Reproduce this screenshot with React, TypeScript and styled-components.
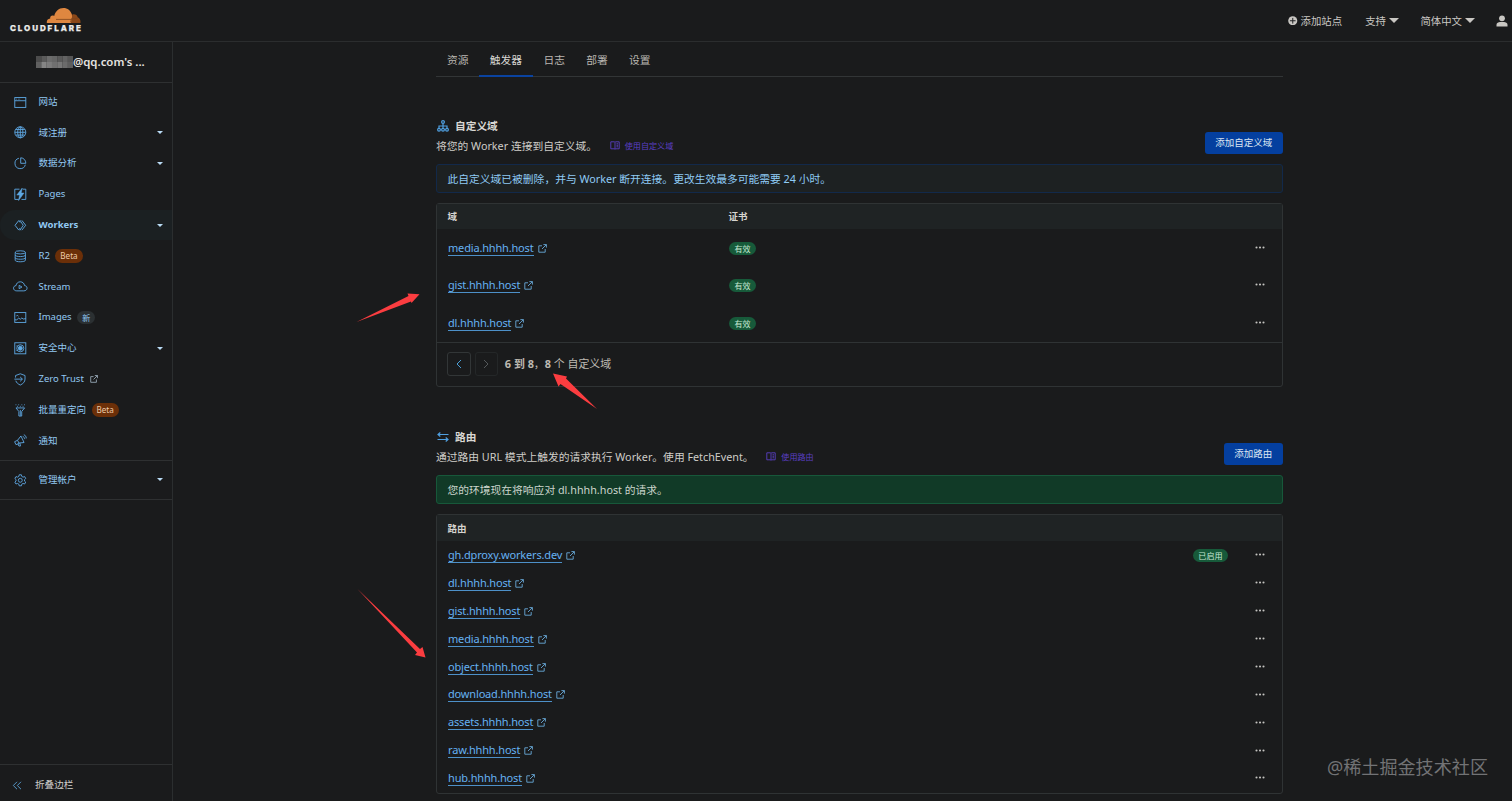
import React from 'react';
import styled, { createGlobalStyle, css } from 'styled-components';

const GlobalStyle = createGlobalStyle`
  *, *::before, *::after { box-sizing: border-box; }
  body {
    margin: 0;
    background: #1a1b1c;
    color: #cfcdc8;
    font-family: 'Noto Sans', 'Noto Sans CJK SC', sans-serif;
    font-size: 10.77px;
    line-height: 16px;
    overflow: hidden;
  }
`;

const Page = styled.div`
  position: relative;
  display: flex;
  flex-direction: column;
  height: 801px;
  overflow: hidden;
`;

const TopBar = styled.header`
  display: flex;
  flex: none;
  align-items: center;
  justify-content: space-between;
  height: 42px;
  padding: 0 4px 0 9px;
  border-bottom: 1px solid #2b2d2e;
`;

const TopNav = styled.nav`
  display: flex;
  align-items: center;
`;

const TopLink = styled.span<{ $after: number }>`
  display: flex;
  align-items: center;
  gap: 3px;
  margin-right: ${(p) => p.$after}px;
  color: #c9c7c3;
  font-size: 10.4px;
`;

const Caret = styled.i<{ $size: number }>`
  width: 0;
  height: 0;
  border: ${(p) => p.$size}px solid transparent;
  border-top-color: ${(p) => (p.$size > 4 ? '#c9c7c3' : '#b9dcf5')};
  border-bottom: 0;
`;

const Body = styled.div`
  display: flex;
  flex: 1;
  min-height: 0;
`;

const Sidebar = styled.aside`
  display: flex;
  flex: none;
  flex-direction: column;
  width: 173px;
  border-right: 1px solid #2b2e2f;
`;

const Account = styled.div`
  display: flex;
  align-items: center;
  height: 41px;
  padding-left: 36px;
  border-bottom: 1px solid #2e3031;
  color: #e6e4e0;
  font-size: 11.4px;
  font-weight: 600;
`;

const NavList = styled.div`
  display: flex;
  flex-direction: column;
  padding: 3.5px 0 4px;
`;

const NavItem = styled.div<{ $active?: boolean }>`
  display: flex;
  align-items: center;
  height: 30.8px;
  padding: 0 9px 0 14px;
  border-radius: 15px 0 0 15px;
  color: #92c9f3;
  font-size: 9.5px;
  ${(p) =>
    p.$active &&
    css`
      background: #1b2022;
      font-weight: 700;
    `}
  & > svg { flex: none; margin-right: 11.9px; }
  & > ${Caret} { margin-left: auto; }
`;

const AccountGroup = styled.div`
  padding: 3.5px 0;
  border: solid #2e3031;
  border-width: 1px 0;
`;

const Badge = styled.span<{ $tone: 'beta' | 'fresh' | 'ok' }>`
  display: inline-flex;
  align-items: center;
  height: 13.4px;
  padding: 0 5.4px;
  border-radius: 7px;
  font-size: 8.1px;
  line-height: 13px;
  background: ${(p) => ({ beta: '#6b2f08', fresh: '#2b3032', ok: '#175a3a' })[p.$tone]};
  color: ${(p) => ({ beta: '#eecba9', fresh: '#8fc6ee', ok: '#c5e8d2' })[p.$tone]};
`;

const NavBadge = styled(Badge)`
  margin-left: 5.5px;
  padding: 0 5px;
`;

const Collapse = styled.div`
  display: flex;
  align-items: center;
  gap: 13px;
  height: 37px;
  margin-top: auto;
  padding: 4px 0 0 12px;
  border-top: 1px solid #2e3031;
  color: #d0cecb;
  font-size: 9.6px;
`;

const Main = styled.main`
  width: 847px;
  margin-left: 263px;
`;

const Tabs = styled.div`
  display: flex;
  height: 35px;
  padding-left: 0.3px;
  border-bottom: 1px solid #323536;
`;

const Tab = styled.div<{ $active?: boolean }>`
  height: 35px;
  padding: 9.5px 10.6px 0 10.7px;
  line-height: 16px;
  border-bottom: 2px solid ${(p) => (p.$active ? '#0a43a0' : 'transparent')};
  color: ${(p) => (p.$active ? '#d8d6d2' : '#b9b6b1')};
`;

const Section = styled.section<{ $top: number }>`
  padding-top: ${(p) => p.$top}px;
`;

const SectionHead = styled.div<{ $height: number }>`
  display: flex;
  align-items: flex-start;
  justify-content: space-between;
  height: ${(p) => p.$height}px;
`;

const Title = styled.h2`
  display: flex;
  align-items: center;
  gap: 6.5px;
  margin: 0;
  padding-left: 0.5px;
  height: 20px;
  color: #d9d7d3;
  font-size: 10.7px;
  font-weight: 700;
`;

const Description = styled.div`
  display: flex;
  align-items: center;
  height: 20px;
`;

const DocLink = styled.span`
  display: inline-flex;
  align-items: center;
  gap: 5px;
  margin-left: 12.7px;
  color: #5a3fc4;
  font-size: 8.1px;
`;

const Button = styled.button`
  height: 22px;
  margin: 16px 0.5px 0 0;
  padding: 0 10.3px;
  border: 0;
  border-radius: 3px;
  background: #043f9f;
  color: #dce6f2;
  font: inherit;
  font-size: 9.5px;
  line-height: 21px;
`;

const Notice = styled.div<{ $tone: 'info' | 'success' }>`
  display: flex;
  align-items: center;
  height: 29px;
  padding: 1px 0 0 10.5px;
  border-radius: 3px;
  ${(p) =>
    p.$tone === 'info'
      ? css`
          border: 1px solid #12294a;
          background: #1d2122;
          color: #8fcbf5;
        `
      : css`
          border: 1px solid #17583a;
          background: #113a27;
          color: #cbd5cc;
        `}
`;

const Table = styled.div`
  margin-top: 10.5px;
  border: 1px solid #2f3334;
  border-radius: 3px;
`;

const TableHead = styled.div<{ $height: number }>`
  display: flex;
  align-items: center;
  height: ${(p) => p.$height}px;
  padding: 0.5px 0 0 10.5px;
  background: #1f2324;
  color: #d6d4d0;
  font-size: 9.5px;
  font-weight: 700;
`;

const Row = styled.div<{ $height: number }>`
  display: flex;
  align-items: center;
  height: ${(p) => p.$height}px;
  padding: 0 17px 0 11px;
`;

const DomainCell = styled.div`
  display: flex;
  align-items: center;
  width: 281px;
`;

const StatusCell = styled.div<{ $end?: boolean }>`
  display: flex;
  flex: 1;
  justify-content: ${(p) => (p.$end ? 'flex-end' : 'flex-start')};
  padding-right: 27px;
`;

const Link = styled.a`
  height: 15px;
  margin-right: 4px;
  border-bottom: 1px solid #4d90c8;
  color: #65b1f2;
  font-size: 11px;
  letter-spacing: -0.17px;
  line-height: 14px;
  white-space: nowrap;
`;

const Pager = styled.div`
  display: flex;
  align-items: center;
  height: 44.5px;
  padding: 0 0 1px 10px;
  border-top: 1px solid #2f3334;
  color: #bdb9b1;
  font-size: 10.9px;
  white-space: pre;
`;

const PageButton = styled.span<{ $disabled?: boolean }>`
  display: flex;
  align-items: center;
  justify-content: center;
  width: 23.5px;
  height: 23.5px;
  margin-right: 4px;
  border: 1px solid ${(p) => (p.$disabled ? '#242728' : '#323637')};
  border-radius: 3px;
  color: ${(p) => (p.$disabled ? '#55595b' : '#4a9fd8')};
`;

const MoreDots = styled.svg`
  margin-bottom: 1.5px;
`;

const Annotations = styled.svg`
  position: absolute;
  inset: 0;
  pointer-events: none;
`;

const Watermark = styled.div`
  position: absolute;
  right: 24px;
  bottom: 20px;
  color: #727375;
  font-size: 18.1px;
  line-height: 28px;
`;

const ExternalGap = styled.span`
  display: flex;
  margin-left: 6px;
`;

const glyphs: Record<string, React.ReactNode> = {
  sites: (<><rect x="1" y="2" width="14" height="12.5" /><path d="M1 6h14M3 4h.8M5 4h.8M7 4h.8" /></>),
  globe: (<><circle cx="8" cy="8" r="7" /><ellipse cx="8" cy="8" rx="3.3" ry="7" /><path d="M1 8h14M8 1v14M2.3 4.5h11.4M2.3 11.5h11.4" /></>),
  chart: (<><path d="M6.2 1.6A6.7 6.7 0 1 0 14.4 9.8" /><path d="M8.5 1v7H15A6.7 6.7 0 0 0 8.5 1Z" /></>),
  pages: (<><path d="M7 1.5H1v13h5M9.5 14.5H15v-13h-4" /><path d="M10.500 0 3.500 9h3.500L5.800 16l6.900-9.600H9.200Z" fill="currentColor" stroke="currentColor" strokeWidth=".6" /></>),
  workers: (<><path d="M6 2 1.300 8 6 14M7.500 1.500l4.200 6.500-4.200 6.500M10 1.800 14.800 8 10 14.200M6 2l1.800 2.500M6 14l1.800-2.500" /></>),
  r2: (<><ellipse cx="8" cy="3" rx="6.5" ry="2" /><path d="M1.500 3v10c0 2.600 13 2.600 13 0V3M1.500 6.400c0 2.600 13 2.600 13 0M1.500 9.800c0 2.600 13 2.600 13 0" /></>),
  stream: (<><path d="M3.500 13.800C1 13.800-.6 12.300-.6 10.400c0-1.900 1.400-3.200 3.200-3.300C3 4.300 5 2.300 8 2.300s5 2 5.400 4.800c1.800.1 3.200 1.400 3.200 3.300 0 1.900-1.600 3.400-4.100 3.400Z" /><path d="M6.500 6.800v4.200l3.600-2.100Z" /></>),
  images: (<><rect x="1" y="2" width="14" height="12.5" /><path d="M1 11.200h2.500L6 9l2 1.500 2-1.700 1.700 1.400 3.300-.5" /><path d="M3 6.300c1-1 2-.8 2.700.5" /></>),
  security: (<><rect x="1" y="1" width="14" height="14" /><circle cx="8" cy="8" r="4.5" /><circle cx="8" cy="8" r="2.5" fill="currentColor" /><path d="M3.500 4.500v1M3.500 10.500v1" /></>),
  trust: (<><path d="M2 5.800V3.200L8 1l6 2.200v4.500c0 3.500-2.500 6-6 7.600-3-1.300-5-3.100-5.700-5.500" /><path d="M.5 7.800h10M7.800 5l2.900 2.800-2.900 2.800" /></>),
  redirect: (<><path d="M2.500 5h11L9.800 9.500v5.800H6.200V9.500ZM8 7.500v7.500" /><path d="M2 1h1M5.500 1h1M9.500 1h1M13 1h1M4 3h1M7.500 3h1M11 3h1" /></>),
  notify: (<><path d="M4.500 8 8.800 2.500l4 8.300-6.500.7M4.500 8 .8 9.800l1.700 3.700 4-1.500ZM5 12.500l1.200 2.800h2l-.7-3.700" /><path d="M11 3c1.500.5 2.500 1.800 2.700 3.500M12.500 .8c1.800.8 2.900 2.500 3.200 4.700" /></>),
  gear: (<><path d="m6.600 1-.4 2-1.700 1-2-.7L1.100 5.700l1.500 1.400v1.900L1.100 10.300l1.400 2.400 2-.7 1.700 1 .4 2h2.800l.4-2 1.700-1 2 .7 1.400-2.400-1.500-1.300V7.100l1.500-1.400-1.400-2.400-2 .7-1.700-1-.4-2Z" /><circle cx="8" cy="8" r="2.500" /></>),
};

function NavIcon({ name }: { name: string }) {
  return (
    <svg width="12.600" height="12.600" viewBox="0 0 16 16" fill="none" stroke="#5ea9e4" color="#5ea9e4" strokeWidth="1.150" overflow="visible">
      {glyphs[name]}
    </svg>
  );
}

function ExternalIcon({ size = 9, color = '#69a9d8' }: { size?: number; color?: string }) {
  return (
    <svg width={size} height={size} viewBox="0 0 9 9" fill="none" stroke={color} strokeWidth="0.9">
      <path d="M4 1.800H.8v6.400h6.400V5M5.400.6h3v3M8.300.700 4 5" />
    </svg>
  );
}

function BookIcon() {
  return (
    <svg width="10" height="9" viewBox="0 0 10 9" fill="none" stroke="#5a3fc4" strokeWidth="0.9">
      <path d="M.8.800h3.500l.7.5.7-.5h3.500v7H5.700l-.7.5-.7-.5H.8ZM5 1.300v7M6.500 2.800h1.500M6.500 4.300h1.500M6.500 5.800h1.500" />
    </svg>
  );
}

function MoreIcon() {
  return (
    <MoreDots width="10" height="3" viewBox="0 0 10 3" fill="#c4c3c0">
      <circle cx="1.5" cy="1.5" r="1.05" />
      <circle cx="5" cy="1.5" r="1.05" />
      <circle cx="8.5" cy="1.5" r="1.05" />
    </MoreDots>
  );
}

function Logo() {
  return (
    <svg width="74" height="28" viewBox="9 7 74 28">
      <path d="M70 22.900 72.300 14.600c2.300-.9 4.900.4 5.400 2.700 1.900.6 3.100 2.700 2.800 5.600Z" fill="#8a4718" />
      <path d="M46.800 22.900c-.3-2.400 1-4.200 3.400-4.400-.3-2.400 2-3.700 4-2.400C55.300 11.300 58.800 8 63.400 8c4.200 0 7.400 2.700 8.500 6.500.5 2-.2 4.700-1 8.400Z" fill="#df8740" />
      <path d="M56 19.400h15.500M70.500 22.300l1-3.600 6-.2" stroke="#7d451e" strokeWidth=".8" fill="none" />
      <text x="9.9" y="31.3" fill="#ecebe9" stroke="#ecebe9" strokeWidth=".25" fontFamily="Inter, sans-serif" fontWeight="800" fontSize="8" textLength="71" lengthAdjust="spacing">
        CLOUDFLARE
      </text>
    </svg>
  );
}

const maskTones = ['#4c4c4c', '#5b5b5b', '#6c6c6c', '#666', '#5a5a5a', '#636363', '#555', '#606060', '#858585', '#7c7c7c', '#707070', '#777', '#6b6b6b', '#5d5d5d'];

function MaskedName() {
  return (
    <svg width="37" height="12" viewBox="0 0 37 12">
      {maskTones.map((tone, i) => (
        <rect key={i} x={(i % 7) * 5.3} y={i < 7 ? 0 : 6} width="5.4" height="6" fill={tone} />
      ))}
    </svg>
  );
}

type NavEntry = { icon: string; label: string; caret?: boolean; active?: boolean; badge?: string; tone?: 'beta' | 'fresh'; external?: boolean };

const navEntries: NavEntry[] = [
  { icon: 'sites', label: '网站' },
  { icon: 'globe', label: '域注册', caret: true },
  { icon: 'chart', label: '数据分析', caret: true },
  { icon: 'pages', label: 'Pages' },
  { icon: 'workers', label: 'Workers', caret: true, active: true },
  { icon: 'r2', label: 'R2', badge: 'Beta', tone: 'beta' },
  { icon: 'stream', label: 'Stream' },
  { icon: 'images', label: 'Images', badge: '新', tone: 'fresh' },
  { icon: 'security', label: '安全中心', caret: true },
  { icon: 'trust', label: 'Zero Trust', external: true },
  { icon: 'redirect', label: '批量重定向', badge: 'Beta', tone: 'beta' },
  { icon: 'notify', label: '通知' },
];

function NavRow({ icon, label, caret, active, badge, tone = 'beta', external }: NavEntry) {
  return (
    <NavItem $active={active}>
      <NavIcon name={icon} />
      {label}
      {badge && <NavBadge $tone={tone}>{badge}</NavBadge>}
      {external && <ExternalGap><ExternalIcon size={8} color="#a5b8c6" /></ExternalGap>}
      {caret && <Caret $size={3.5} />}
    </NavItem>
  );
}

const domains = ['media.hhhh.host', 'gist.hhhh.host', 'dl.hhhh.host'];

const routes = [
  'gh.dproxy.workers.dev',
  'dl.hhhh.host',
  'gist.hhhh.host',
  'media.hhhh.host',
  'object.hhhh.host',
  'download.hhhh.host',
  'assets.hhhh.host',
  'raw.hhhh.host',
  'hub.hhhh.host',
];

export default function App() {
  return (
    <Page>
      <GlobalStyle />
      <TopBar>
        <Logo />
        <TopNav>
          <TopLink $after={23}>
            <svg width="9.500" height="9.500" viewBox="0 0 9 9">
              <circle cx="4.500" cy="4.500" r="4.300" fill="#c9c7c3" />
              <path d="M4.500 1.800v5.400M1.800 4.500h5.400" stroke="#1a1b1c" strokeWidth=".9" />
            </svg>
            添加站点
          </TopLink>
          <TopLink $after={21.5}>支持<Caret $size={5} /></TopLink>
          <TopLink $after={21}>简体中文<Caret $size={5} /></TopLink>
          <svg width="12" height="12" viewBox="0 0 12 12" fill="#c9c7c3">
            <circle cx="6" cy="3.300" r="2.900" />
            <path d="M.5 11.500V9.800C.5 7.800 2.500 7 4 7h4c1.500 0 3.500.8 3.500 2.800v1.700Z" />
          </svg>
        </TopNav>
      </TopBar>
      <Body>
        <Sidebar>
          <Account><MaskedName />@qq.com's ...</Account>
          <NavList>
            {navEntries.map((entry) => <NavRow key={entry.icon} {...entry} />)}
          </NavList>
          <AccountGroup>
            <NavRow icon="gear" label="管理帐户" caret />
          </AccountGroup>
          <Collapse>
            <svg width="10" height="9" viewBox="0 0 10 9" fill="none" stroke="#5797c6" strokeWidth="1">
              <path d="M5 .8 1.300 4.500 5 8.200M9 .8 5.300 4.500 9 8.200" />
            </svg>
            折叠边栏
          </Collapse>
        </Sidebar>
        <Main>
          <Tabs>
            <Tab>资源</Tab>
            <Tab $active>触发器</Tab>
            <Tab>日志</Tab>
            <Tab>部署</Tab>
            <Tab>设置</Tab>
          </Tabs>

          <Section $top={38.8}>
            <SectionHead $height={48.2}>
              <div>
                <Title>
                  <svg width="12" height="12" viewBox="0 0 12 12" fill="none" stroke="#4f9fdf" strokeWidth="1.200">
                    <circle cx="6" cy="2" r="1.400" />
                    <path d="M6 3.400V8M2 8V6h8v2" />
                    <circle cx="2" cy="9.700" r="1.400" />
                    <circle cx="6" cy="9.700" r="1.400" />
                    <circle cx="10" cy="9.700" r="1.400" />
                  </svg>
                  自定义域
                </Title>
                <Description>
                  将您的 Worker 连接到自定义域。
                  <DocLink><BookIcon />使用自定义域</DocLink>
                </Description>
              </div>
              <Button>添加自定义域</Button>
            </SectionHead>
            <Notice $tone="info">此自定义域已被删除，并与 Worker 断开连接。更改生效最多可能需要 24 小时。</Notice>
            <Table>
              <TableHead $height={25}>
                <DomainCell>域</DomainCell>
                <span>证书</span>
              </TableHead>
              {domains.map((host) => (
                <Row key={host} $height={37.5}>
                  <DomainCell><Link>{host}</Link><ExternalIcon /></DomainCell>
                  <StatusCell><Badge $tone="ok">有效</Badge></StatusCell>
                  <MoreIcon />
                </Row>
              ))}
              <Pager>
                <PageButton>
                  <svg width="6" height="10" viewBox="0 0 6 10" fill="none" stroke="currentColor"><path d="M5 1 1 5l4 4" /></svg>
                </PageButton>
                <PageButton $disabled>
                  <svg width="6" height="10" viewBox="0 0 6 10" fill="none" stroke="currentColor"><path d="m1 1 4 4-4 4" /></svg>
                </PageButton>
                <span> <b>6 到 8</b>，<b>8 </b>个 自定义域</span>
              </Pager>
            </Table>
          </Section>

          <Section $top={39.3}>
            <SectionHead $height={48.2}>
              <div>
                <Title>
                  <svg width="12" height="12" viewBox="0 0 12 12" fill="none" stroke="#4f9fdf" strokeWidth="1.200">
                    <path d="M11.500 3.500H1M3.300 1.500 1 3.500l2.300 2M.5 8.500H11M8.700 6.500 11 8.500l-2.300 2" />
                  </svg>
                  路由
                </Title>
                <Description>
                  通过路由 URL 模式上触发的请求执行 Worker。使用 FetchEvent。
                  <DocLink><BookIcon />使用路由</DocLink>
                </Description>
              </div>
              <Button>添加路由</Button>
            </SectionHead>
            <Notice $tone="success">您的环境现在将响应对 dl.hhhh.host 的请求。</Notice>
            <Table>
              <TableHead $height={26}>路由</TableHead>
              {routes.map((host, i) => (
                <Row key={host} $height={27.92}>
                  <DomainCell><Link>{host}</Link><ExternalIcon /></DomainCell>
                  <StatusCell $end>{i === 0 && <Badge $tone="ok">已启用</Badge>}</StatusCell>
                  <MoreIcon />
                </Row>
              ))}
            </Table>
          </Section>
        </Main>
      </Body>
      <Annotations width="1512" height="801" viewBox="0 0 1512 801" fill="#fb3d40">
        <path d="M356.500 322 411 301.500 411.500 303 419.500 294.300 407.500 293.500 408.500 296Z" />
        <path d="M597 409 566 378.500 567 376.500 553 373.500 558.500 386.500 560.500 384Z" />
        <path d="M357.500 589 417 652.500 415 655 425.500 657.500 422.500 647 420 649Z" />
      </Annotations>
      <Watermark>@稀土掘金技术社区</Watermark>
    </Page>
  );
}
